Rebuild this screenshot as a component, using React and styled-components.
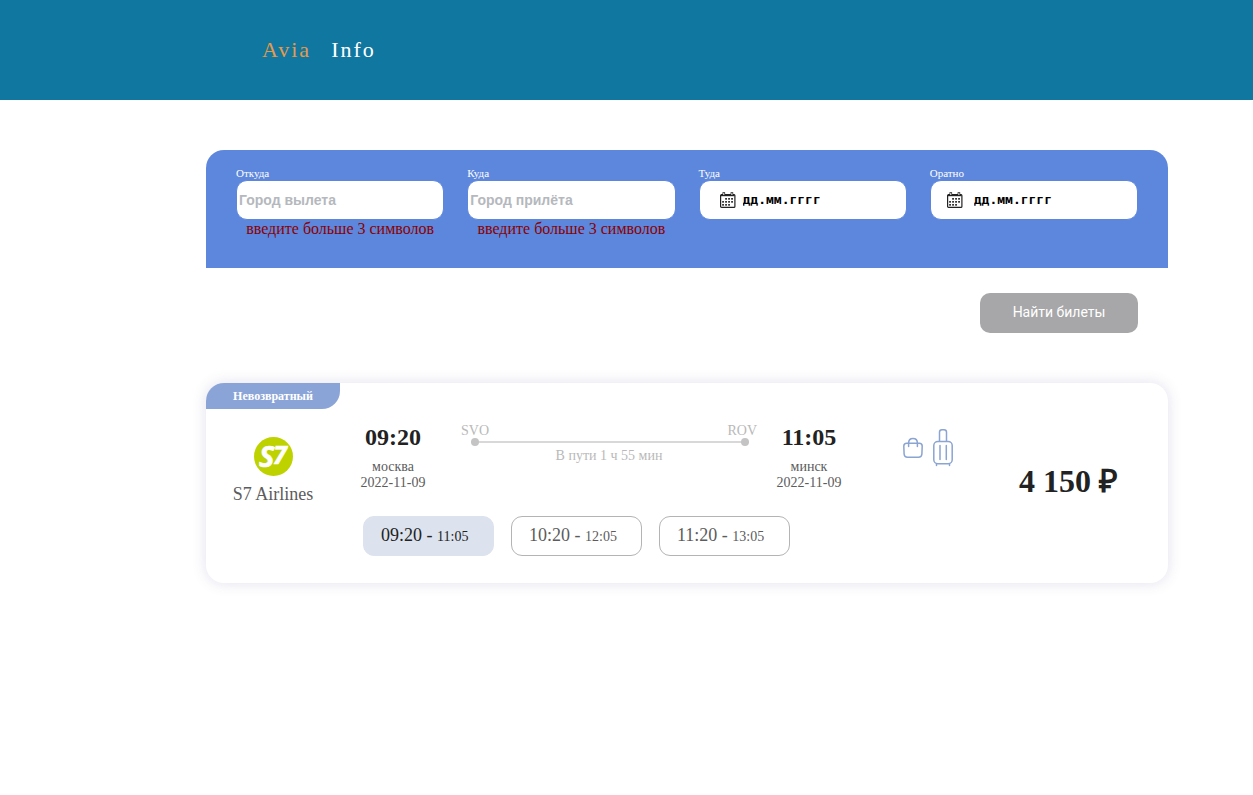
import React, { useState } from "react";
import styled, { createGlobalStyle } from "styled-components";

const GlobalStyle = createGlobalStyle`
  *, *::before, *::after { box-sizing: border-box; }
  body {
    margin: 0;
    background: #fff;
    color: #5c5c5c;
    font-family: "Liberation Serif", "Times New Roman", serif;
    font-size: 14px;
    line-height: 16px;
  }
  button, input { font: inherit; color: inherit; }
`;

const Header = styled.header`
  display: flex;
  align-items: center;
  height: 100px;
  padding: 0 262px;
  background: #1077a0;
`;

const Brand = styled.a`
  display: flex;
  gap: 20px;
  color: #fff;
  font-size: 22px;
  line-height: 26px;
  letter-spacing: 2px;
  text-decoration: none;
`;

const BrandAccent = styled.span`
  color: #e59a4b;
`;

const Main = styled.main`
  margin: 50px 85px 50px 206px;
`;

const SearchForm = styled.form`
  display: flex;
  flex-direction: column;
`;

const SearchPanel = styled.div`
  display: grid;
  grid-template-columns: repeat(4, minmax(0, 1fr));
  gap: 23px;
  padding: 16px 30px 30px;
  background: #5d87dc;
  border-radius: 18px 18px 0 0;
`;

const Field = styled.div`
  display: flex;
  flex-direction: column;
`;

const FieldLabel = styled.label`
  color: #fff;
  font-size: 11px;
  line-height: 14px;
`;

const FieldBox = styled.div`
  display: flex;
  align-items: center;
  height: 40px;
  padding: 0 0 0 ${(p) => p.$indent || 2}px;
  gap: ${(p) => p.$gap || 0}px;
  border: 1px solid #5d87dc;
  border-radius: 11px;
  background: #fff;
`;

const FieldInput = styled.input`
  flex: 1;
  min-width: 0;
  padding: 0;
  border: 0;
  outline: 0;
  background: transparent;
  color: #000;
  font-family: ${(p) =>
    p.$mono ? '"DejaVu Sans Mono", monospace' : '"Liberation Sans", Arial, sans-serif'};
  font-size: ${(p) => (p.$mono ? 13 : 14)}px;
  line-height: 20px;
  font-weight: 700;
  &::placeholder {
    color: ${(p) => (p.$mono ? "#000" : "#b5b8bd")};
    opacity: 1;
  }
`;

const FieldError = styled.p`
  margin: 0;
  color: #8b0000;
  font-size: 16px;
  line-height: 18px;
  text-align: center;
`;

const SubmitButton = styled.button`
  align-self: flex-end;
  width: 158px;
  height: 40px;
  margin: 25px 30px 50px;
  padding: 0 0 2px;
  border: 0;
  border-radius: 10px;
  background: #a7a7a9;
  color: #fff;
  font-family: Roboto, Arial, sans-serif;
  font-size: 14px;
`;

const Ticket = styled.article`
  display: flex;
  min-height: 200px;
  border-radius: 18px;
  background: #fff;
  box-shadow: 0 0 14px rgba(70, 70, 150, 0.17);
`;

const Airline = styled.div`
  flex: none;
  display: flex;
  flex-direction: column;
  align-items: center;
  width: 134px;
`;

const Tag = styled.span`
  align-self: stretch;
  margin-bottom: 28px;
  border-radius: 18px 0 18px 0;
  background: #8ba4d8;
  color: #fff;
  font-size: 12px;
  font-weight: 700;
  line-height: 26px;
  text-align: center;
`;

const AirlineName = styled.span`
  margin-top: 8px;
  font-size: 18px;
  line-height: 20px;
`;

const Flight = styled.div`
  flex: 1;
  padding: 41px 0 27px 21px;
`;

const Leg = styled.div`
  display: flex;
`;

const Stop = styled.div`
  flex: none;
  width: 64px;
  display: flex;
  flex-direction: column;
  align-items: center;
  white-space: nowrap;
`;

const StopTime = styled.strong`
  margin-bottom: 9px;
  color: #222;
  font-size: 24px;
  line-height: 26px;
`;

const Route = styled.div`
  flex: 1;
  margin: -1px 20px 0 36px;
  color: #b9b9b9;
  text-align: center;
`;

const Airports = styled.div`
  display: flex;
  justify-content: space-between;
`;

const Track = styled.div`
  display: flex;
  align-items: center;
  justify-content: space-between;
  height: 8px;
  margin: -1px 8px 2px 10px;
  background: linear-gradient(#d8d8d8, #d8d8d8) center / 100% 2px no-repeat;
  &::before, &::after {
    content: "";
    width: 8px;
    height: 8px;
    border-radius: 50%;
    background: #c4c4c4;
  }
`;

const Slots = styled.div`
  display: flex;
  gap: 17px;
  margin: 25px 0 0 2px;
`;

const Slot = styled.button`
  width: 131px;
  height: 40px;
  padding: 0 0 0 17px;
  border: 1px solid ${(p) => (p.$active ? "#dce2ee" : "#b4b4b4")};
  border-radius: 11px;
  background: ${(p) => (p.$active ? "#dce2ee" : "#fff")};
  color: ${(p) => (p.$active ? "#222" : "#5c5c5c")};
  font-size: 18px;
  text-align: left;
  white-space: nowrap;
`;

const SlotArrival = styled.span`
  font-size: 14px;
`;

const Baggage = styled.div`
  flex: none;
  display: flex;
  align-items: flex-start;
  gap: 10px;
  margin: 46px 66px 0 62px;
`;

const Price = styled.strong`
  flex: none;
  margin: 80px 50px 0 0;
  color: #222;
  font-size: 32px;
  line-height: 36px;
`;

const CALENDAR_DAYS = [
  [5, 6], [8, 6], [11, 6],
  [2, 9], [5, 9], [8, 9], [11, 9],
  [2, 12], [5, 12], [8, 12],
];

function CalendarIcon() {
  return (
    <svg width="16" height="16" viewBox="0 0 16 16" aria-hidden="true">
      <rect x=".6" y="2.600" width="14.300" height="12.800" rx="1" fill="#fff" stroke="#222" strokeWidth="1.200" />
      <path d="M1 2.400h13.500v1.800H1z" fill="#222" />
      <path d="M2.500 .3h2.600v3.400H2.500zM10.600 .3h2.600v3.400h-2.600z" fill="#222" />
      <path d="M3.300 1.100h1v1.800h-1zM11.400 1.100h1v1.800h-1z" fill="#fff" />
      {CALENDAR_DAYS.map(([x, y]) => (
        <rect key={`${x}-${y}`} x={x + 0.2} y={y} width="1.700" height="1.700" fill="#222" />
      ))}
    </svg>
  );
}

function AirlineLogo() {
  return (
    <svg width="39" height="39" viewBox="0 0 39 39" role="img" aria-label="S7">
      <circle cx="19.500" cy="19.500" r="19.500" fill="#bed200" />
      <g
        fill="#fff"
        stroke="#fff"
        strokeWidth=".6"
        fontFamily="'Open Sans', sans-serif"
        fontWeight="700"
        fontStyle="italic"
      >
        <text x="5" y="30" fontSize="29">S</text>
        <text x="19" y="27" fontSize="25">7</text>
      </g>
    </svg>
  );
}

function HandbagIcon() {
  return (
    <svg width="20" height="30" viewBox="0 0 20 30" fill="none" stroke="#8ba4d2" strokeWidth="1.500" strokeLinecap="round" aria-hidden="true">
      <path d="M3.800 14.200h12.400q3 0 3 2.800l-.3 8q-.3 3.300-3.400 3.300H4.500q-3.100 0-3.400-3.300L.8 17q0-2.800 3-2.800z" />
      <path d="M5.600 17.500v-3.300q0-4.700 4.400-4.700t4.400 4.700v3.300" />
    </svg>
  );
}

function SuitcaseIcon() {
  return (
    <svg width="20" height="38" viewBox="0 0 20 38" fill="none" stroke="#8ba4d2" strokeWidth="1.500" strokeLinecap="round" aria-hidden="true">
      <path d="M6.500 12V3.300q0-2.500 2.500-2.500h2q2.500 0 2.500 2.500V12" />
      <rect x=".8" y="12.500" width="18.400" height="22.200" rx="4" />
      <path d="M7 16.500v14M13.300 16.500v14M3.500 35v1.500M16.500 35v1.500" />
    </svg>
  );
}

const FIELDS = [
  { id: "from", label: "Откуда", placeholder: "Город вылета", error: true },
  { id: "to", label: "Куда", placeholder: "Город прилёта", error: true },
  { id: "depart", label: "Туда", placeholder: "дд.мм.гггг", indent: 20, gap: 7 },
  { id: "return", label: "Оратно", placeholder: "дд.мм.гггг", indent: 16, gap: 11 },
];

const SLOTS = [
  ["09:20", "11:05"],
  ["10:20", "12:05"],
  ["11:20", "13:05"],
];

export default function App() {
  const [active, setActive] = useState(0);

  return (
    <>
      <GlobalStyle />
      <Header>
        <Brand href="#">
          <BrandAccent>Avia</BrandAccent>
          <span>Info</span>
        </Brand>
      </Header>
      <Main>
        <SearchForm onSubmit={(e) => e.preventDefault()}>
          <SearchPanel>
            {FIELDS.map((f) => (
              <Field key={f.id}>
                <FieldLabel htmlFor={f.id}>{f.label}</FieldLabel>
                <FieldBox $indent={f.indent} $gap={f.gap}>
                  {f.indent && <CalendarIcon />}
                  <FieldInput id={f.id} placeholder={f.placeholder} $mono={Boolean(f.indent)} />
                </FieldBox>
                {f.error && <FieldError>введите больше 3 символов</FieldError>}
              </Field>
            ))}
          </SearchPanel>
          <SubmitButton type="submit">Найти билеты</SubmitButton>
        </SearchForm>

        <Ticket>
          <Airline>
            <Tag>Невозвратный</Tag>
            <AirlineLogo />
            <AirlineName>S7 Airlines</AirlineName>
          </Airline>
          <Flight>
            <Leg>
              <Stop>
                <StopTime>09:20</StopTime>
                <span>москва</span>
                <span>2022-11-09</span>
              </Stop>
              <Route>
                <Airports>
                  <span>SVO</span>
                  <span>ROV</span>
                </Airports>
                <Track />
                <span>В пути 1 ч 55 мин</span>
              </Route>
              <Stop>
                <StopTime>11:05</StopTime>
                <span>минск</span>
                <span>2022-11-09</span>
              </Stop>
            </Leg>
            <Slots>
              {SLOTS.map(([start, end], i) => (
                <Slot
                  key={start}
                  type="button"
                  $active={i === active}
                  aria-pressed={i === active}
                  onClick={() => setActive(i)}
                >
                  {start} - <SlotArrival>{end}</SlotArrival>
                </Slot>
              ))}
            </Slots>
          </Flight>
          <Baggage>
            <HandbagIcon />
            <SuitcaseIcon />
          </Baggage>
          <Price>4 150 ₽</Price>
        </Ticket>
      </Main>
    </>
  );
}
